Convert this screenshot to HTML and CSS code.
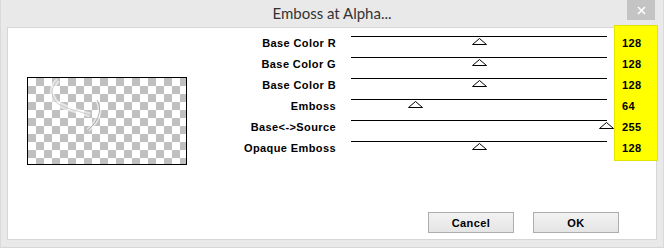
FILE: index.html
```html
<!DOCTYPE html>
<html lang="en">
<head>
    <meta charset="UTF-8">
    <title>Emboss at Alpha...</title>
    <link rel="stylesheet" href="styles.css">
</head>
<body>
    <div class="dialog">
        <div class="titlebar">
            <span></span>
            <div class="title">Emboss at Alpha...</div>
            <button class="close" type="button">
                <svg width="9" height="9" viewBox="0 0 9 9">
                    <path d="M1 1 L8 8 M8 1 L1 8" stroke="#fff" stroke-width="1.6" fill="none"/>
                </svg>
            </button>
        </div>

        <div class="panel">
            <div class="params">
                <div class="preview">
                    <svg class="emboss" width="158" height="86" viewBox="0 0 158 86">
                        <path d="M30 2 C24 8 22 16 27 23 C33 30 48 32 62 37" stroke="#fff" stroke-width="5" fill="none" opacity="0.6"/>
                        <path d="M30 2 C24 8 22 16 27 23 C33 30 48 32 62 37" stroke="#9a9a9a" stroke-width="0.8" fill="none" opacity="0.6"/>
                        <path d="M69 22 C74 30 72 42 60 52" stroke="#fff" stroke-width="4" fill="none" opacity="0.6"/>
                        <path d="M69 22 C74 30 72 42 60 52" stroke="#808080" stroke-width="0.9" fill="none" opacity="0.7"/>
                    </svg>
                </div>

                <div class="labels">
                    <div>Base Color R</div>
                    <div>Base Color G</div>
                    <div>Base Color B</div>
                    <div>Emboss</div>
                    <div>Base&lt;-&gt;Source</div>
                    <div>Opaque Emboss</div>
                </div>

                <div class="sliders">
                    <div class="track"><svg class="thumb" style="left:121px" width="15" height="7" viewBox="0 0 15 7"><polygon points="7.5,0.5 14.5,6.5 0.5,6.5"/></svg></div>
                    <div class="track"><svg class="thumb" style="left:121px" width="15" height="7" viewBox="0 0 15 7"><polygon points="7.5,0.5 14.5,6.5 0.5,6.5"/></svg></div>
                    <div class="track"><svg class="thumb" style="left:121px" width="15" height="7" viewBox="0 0 15 7"><polygon points="7.5,0.5 14.5,6.5 0.5,6.5"/></svg></div>
                    <div class="track"><svg class="thumb" style="left:57px" width="15" height="7" viewBox="0 0 15 7"><polygon points="7.5,0.5 14.5,6.5 0.5,6.5"/></svg></div>
                    <div class="track"><svg class="thumb" style="left:248px" width="15" height="7" viewBox="0 0 15 7"><polygon points="7.5,0.5 14.5,6.5 0.5,6.5"/></svg></div>
                    <div class="track"><svg class="thumb" style="left:121px" width="15" height="7" viewBox="0 0 15 7"><polygon points="7.5,0.5 14.5,6.5 0.5,6.5"/></svg></div>
                </div>

                <div class="values">
                    <div>128</div>
                    <div>128</div>
                    <div>128</div>
                    <div>64</div>
                    <div>255</div>
                    <div>128</div>
                </div>
            </div>

            <div class="buttons">
                <button type="button" class="btn">Cancel</button>
                <button type="button" class="btn">OK</button>
            </div>
        </div>
    </div>
</body>
</html>
```

FILE: styles.css
```css
* {
    margin: 0;
    padding: 0;
    box-sizing: border-box;
}

body {
    background: #e9e9e9;
    font-family: 'Liberation Sans', Arial, sans-serif;
    color: #000;
}

.dialog {
    width: 664px;
    height: 248px;
    background: #e9e9e9;
    border-left: 1px solid #dadada;
    border-right: 1px solid #dadada;
    border-bottom: 1px solid #d6d6d6;
}

/* Barra de título */
.titlebar {
    height: 27px;
    display: grid;
    grid-template-columns: 1fr auto 1fr;
}

.title {
    font-family: 'Lato', 'Open Sans', sans-serif;
    font-size: 15px;
    color: #333;
    line-height: 27px;
}

.close {
    justify-self: end;
    width: 28px;
    height: 20px;
    margin-right: 8px;
    border: none;
    background: #c4c4c4;
    display: flex;
    align-items: center;
    justify-content: center;
}

/* Painel branco */
.panel {
    margin: 0 6px;
    height: 213px;
    background: #fff;
    border: 1px solid #d6d6d6;
    padding: 8px 0 0 19px;
    display: flex;
    flex-direction: column;
}

.params {
    display: flex;
    align-items: flex-start;
}

.preview {
    flex-shrink: 0;
    width: 160px;
    height: 88px;
    margin-top: 41px;
    border: 1px solid #000;
    background-color: #fff;
    background-image: conic-gradient(#c0c0c0 0 25%, #fff 0 50%, #c0c0c0 0 75%, #fff 0);
    background-size: 16px 16px;
}

.emboss {
    display: block;
}

.labels {
    flex-shrink: 0;
    width: 149px;
    text-align: right;
}

.labels div,
.values div {
    height: 21px;
    font-size: 11px;
    font-weight: bold;
    letter-spacing: 0.4px;
    line-height: 15px;
    white-space: nowrap;
}

.sliders {
    flex-shrink: 0;
    width: 256px;
    margin-left: 15px;
}

.track {
    position: relative;
    height: 21px;
    border-top: 1px solid #000;
}

.thumb {
    position: absolute;
    top: 1px;
    display: block;
}

.thumb polygon {
    fill: #fff;
    stroke: #000;
    stroke-width: 1;
}

.values {
    flex-shrink: 0;
    width: 44px;
    margin-left: 7px;
    margin-top: -11px;
    padding: 11px 0 0 8px;
    height: 136px;
    background: #ffff00;
    box-shadow: inset 0 0 0 1px #e4e400;
}

/* Botões */
.buttons {
    margin-top: auto;
    margin-bottom: 6px;
    padding-right: 37px;
    display: flex;
    justify-content: flex-end;
    gap: 19px;
}

.btn {
    width: 86px;
    height: 21px;
    border: 1px solid #adadad;
    background: linear-gradient(#f2f2f2, #e5e5e5);
    font-family: 'Liberation Sans', Arial, sans-serif;
    font-size: 11px;
    font-weight: bold;
    letter-spacing: 0.4px;
    color: #000;
}
```
